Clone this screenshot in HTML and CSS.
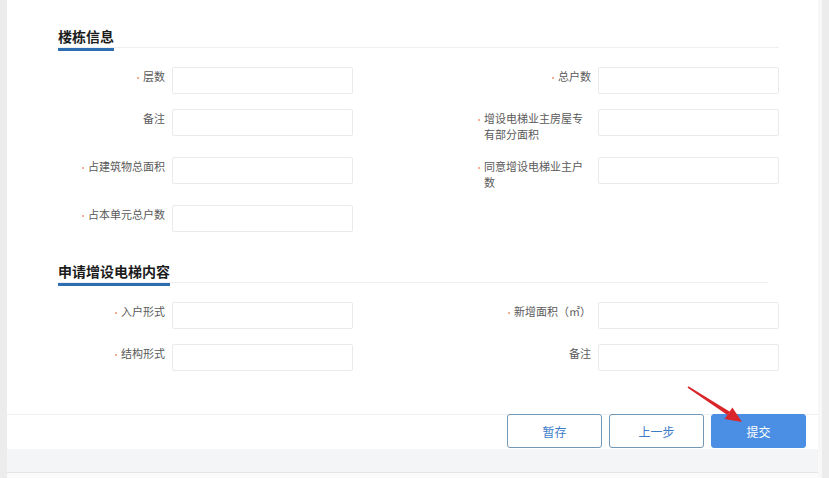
FILE: index.html
```html
<!DOCTYPE html>
<html lang="zh-CN">
<head>
    <meta charset="UTF-8">
    <meta name="viewport" content="width=device-width, initial-scale=1.0">
    <title>增设电梯申请</title>
    <link rel="stylesheet" href="styles.css">
</head>
<body>
    <div class="app">
        <div class="panel">
            <div class="section">
                <div class="section-head"><span class="section-title">楼栋信息</span></div>
                <div class="fields">
                    <div class="field">
                        <label class="field-label"><span class="req">层数</span></label>
                        <input class="field-input" type="text">
                    </div>
                    <div class="field">
                        <label class="field-label"><span class="req">总户数</span></label>
                        <input class="field-input" type="text">
                    </div>
                    <div class="field">
                        <label class="field-label"><span>备注</span></label>
                        <input class="field-input" type="text">
                    </div>
                    <div class="field">
                        <label class="field-label"><span class="req">增设电梯业主房屋专有部分面积</span></label>
                        <input class="field-input" type="text">
                    </div>
                    <div class="field">
                        <label class="field-label"><span class="req">占建筑物总面积</span></label>
                        <input class="field-input" type="text">
                    </div>
                    <div class="field">
                        <label class="field-label"><span class="req">同意增设电梯业主户数</span></label>
                        <input class="field-input" type="text">
                    </div>
                    <div class="field">
                        <label class="field-label"><span class="req">占本单元总户数</span></label>
                        <input class="field-input" type="text">
                    </div>
                </div>
            </div>

            <div class="section section-second">
                <div class="section-head section-head-short"><span class="section-title">申请增设电梯内容</span></div>
                <div class="fields">
                    <div class="field">
                        <label class="field-label"><span class="req">入户形式</span></label>
                        <input class="field-input" type="text">
                    </div>
                    <div class="field">
                        <label class="field-label"><span class="req">新增面积（㎡）</span></label>
                        <input class="field-input" type="text">
                    </div>
                    <div class="field">
                        <label class="field-label"><span class="req">结构形式</span></label>
                        <input class="field-input" type="text">
                    </div>
                    <div class="field">
                        <label class="field-label"><span>备注</span></label>
                        <input class="field-input" type="text">
                    </div>
                </div>
            </div>

            <div class="actions">
                <button class="btn">暂存</button>
                <button class="btn">上一步</button>
                <button class="btn btn-primary">提交</button>
            </div>
        </div>
        <div class="panel-bottom"></div>
    </div>

    <!-- red pointer arrow -->
    <svg class="pointer" width="829" height="478" viewBox="0 0 829 478">
        <polygon points="687.6,387.8 688.4,386.2 730.3,412.0 727.0,414.8" fill="#d8262b"/>
        <polygon points="742,422 724.6,419 732.4,407.4" fill="#d8262b"/>
    </svg>
</body>
</html>
```

FILE: styles.css
```css
* {
    margin: 0;
    padding: 0;
    box-sizing: border-box;
}
body {
    font-family: "Noto Sans CJK SC", "Noto Sans", sans-serif;
    background: #ececec;
    color: #555;
    width: 829px;
    height: 478px;
    overflow: hidden;
    position: relative;
}

.app {
    margin-left: 7px;
    width: 815px;
    border-right: 4px solid #f8f8f8;
    height: 478px;
    background: #fbfbfc;
}

.panel {
    background: #fff;
    padding-top: 23px;
}

.section-head {
    margin: 0 39px 0 51px;
    border-bottom: 1px solid #eeeff1;
    height: 25px;
}
.section-head-short {
    margin-right: 50px;
}
.section-title {
    display: inline-block;
    font-size: 14px;
    line-height: 18px;
    padding-bottom: 3px;
    font-weight: bold;
    color: #1c1c1c;
    border-bottom: 3px solid #2f6db3;
}

.section-second {
    margin-top: 26px;
}

.fields {
    display: grid;
    grid-template-columns: 302px 302px;
    column-gap: 124px;
    row-gap: 15px;
    margin-top: 19px;
    padding-left: 44px;
}
.field {
    display: flex;
    align-items: flex-start;
}
.field-label {
    width: 121px;
    padding: 1px 7px 0 7px;
    display: flex;
    justify-content: flex-end;
    font-size: 11px;
    line-height: 16px;
    color: #5a5a5a;
}
.field-label span {
    position: relative;
    text-align: left;
}
.req::before {
    content: "";
    position: absolute;
    left: -6px;
    top: 9px;
    width: 2px;
    height: 2px;
    border-radius: 1px;
    background: #f0936a;
}
.field-input {
    width: 181px;
    height: 27px;
    border: 1px solid #e9eaec;
    border-radius: 2px;
    background: #fff;
    outline: none;
}

.actions {
    margin-top: 43px;
    border-top: 1px solid #eeeff1;
    display: flex;
    justify-content: flex-end;
    gap: 7px;
    padding-right: 12px;
    height: 35px;
}
.btn {
    width: 95px;
    height: 34px;
    margin-top: -1px;
    border: 1px solid #7097b5;
    border-radius: 3px;
    background: #fff;
    color: #3b7cc8;
    font-family: inherit;
    font-size: 12px;
}
.btn-primary {
    background: #4a8fe4;
    border-color: #4a8fe4;
    color: #fff;
}

.panel-bottom {
    height: 24px;
    background: #f3f5f7;
    border-bottom: 1px solid #e3e5e8;
}

.pointer {
    position: absolute;
    left: 0;
    top: 0;
    pointer-events: none;
}
```
